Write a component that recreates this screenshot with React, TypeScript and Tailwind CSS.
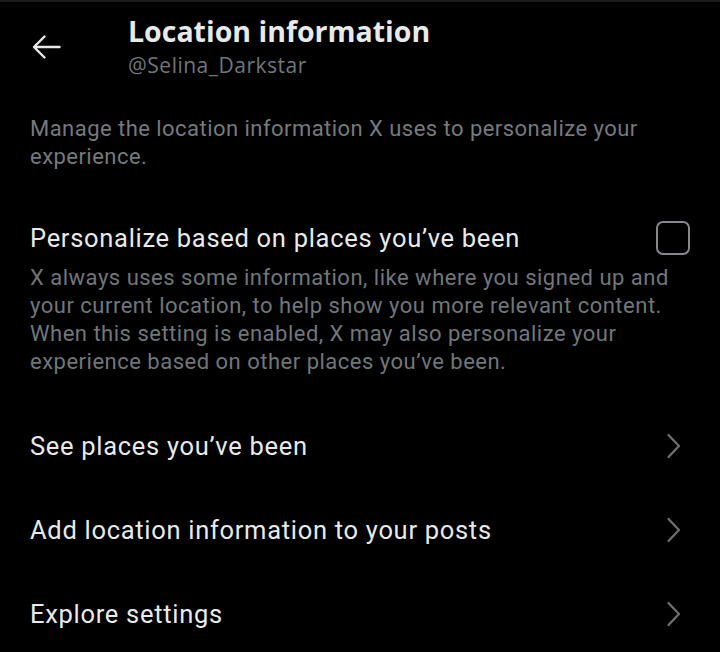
import React from "react";

const rows = [
  "See places you’ve been",
  "Add location information to your posts",
  "Explore settings",
];

const BackArrow = () => (
  <svg width="30" height="30" viewBox="0 0 30 30" fill="none">
    <path
      d="M28.5 15H3.5M13.5 4.5L3 15L13.5 25.5"
      stroke="#e7e9ea"
      strokeWidth="2.4"
      strokeLinecap="round"
      strokeLinejoin="round"
    />
  </svg>
);

const Chevron = () => (
  <svg width="16" height="26" viewBox="0 0 16 26" fill="none">
    <path
      d="M2.5 2L13 13L2.5 24"
      stroke="#6e7074"
      strokeWidth="2.2"
      strokeLinecap="round"
      strokeLinejoin="round"
    />
  </svg>
);

const App = () => {
  return (
    <div
      className="w-[720px] h-[652px] bg-black border-t-2 border-[#1c1c1c] overflow-hidden text-[#e7e9ea]"
      style={{ fontFamily: "Roboto, 'Noto Sans', sans-serif" }}
    >
      {/* header: back button + title / handle */}
      <div className="flex pt-[11px] font-['Open_Sans',sans-serif]">
        <div className="w-[128px] pl-[31px] pt-[19px]">
          <BackArrow />
        </div>
        <div>
          <h1 className="text-[28.5px] leading-[36px] font-bold">
            Location information
          </h1>
          <p className="text-[21px] leading-[32px] tracking-[0.5px] text-[#71767b]">
            @Selina_Darkstar
          </p>
        </div>
      </div>

      <p className="mt-[34px] px-[30px] text-[22px] leading-[28px] tracking-[0.46px] text-[#76797d] whitespace-nowrap">
        Manage the location information X uses to personalize your
        <br />
        experience.
      </p>

      <div className="mt-[50px] px-[30px]">
        <div className="flex items-center justify-between">
          <span className="text-[25.5px] leading-[32px] tracking-[0.7px]">
            Personalize based on places you’ve been
          </span>
          <button className="w-[34px] h-[34px] rounded-[7px] border-[2.5px] border-[#85888c]" />
        </div>
        <p className="mt-[9px] text-[22px] leading-[28px] tracking-[0.5px] text-[#71767b] whitespace-nowrap">
          X always uses some information, like where you signed up and
          <br />
          your current location, to help show you more relevant content.
          <br />
          When this setting is enabled, X may also personalize your
          <br />
          experience based on other places you’ve been.
        </p>
      </div>

      <div className="mt-[28px]">
        {rows.map((label) => (
          <div
            key={label}
            className="h-[84px] px-[30px] flex items-center justify-between"
          >
            <span className="text-[25.5px] leading-[32px] tracking-[0.7px]">
              {label}
            </span>
            <span className="mr-[8px]">
              <Chevron />
            </span>
          </div>
        ))}
      </div>
    </div>
  );
};

export default App;
